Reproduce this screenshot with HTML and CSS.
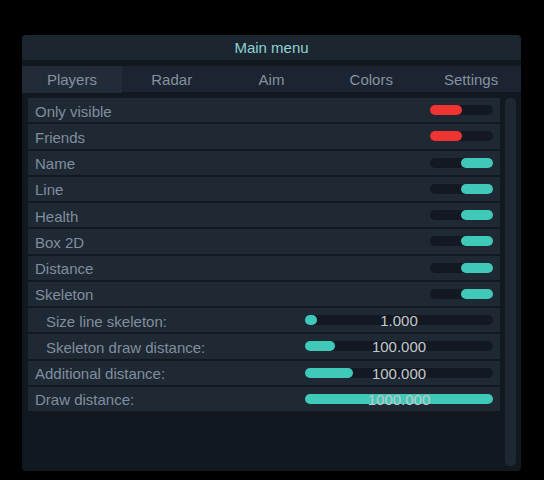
FILE: index.html
```html
<!DOCTYPE html>
<html>
<head>
<meta charset="utf-8">
<link rel="stylesheet" href="styles.css">
</head>
<body>
<div class="window">
  <div class="title">Main menu</div>
  <div class="tabs">
    <div class="tab active">Players</div>
    <div class="tab">Radar</div>
    <div class="tab">Aim</div>
    <div class="tab">Colors</div>
    <div class="tab">Settings</div>
  </div>
  <div class="body">
    <div class="list">
      <div class="row"><span class="label">Only visible</span><div class="toggle off"><div class="knob"></div></div></div>
      <div class="row"><span class="label">Friends</span><div class="toggle off"><div class="knob"></div></div></div>
      <div class="row"><span class="label">Name</span><div class="toggle on"><div class="knob"></div></div></div>
      <div class="row"><span class="label">Line</span><div class="toggle on"><div class="knob"></div></div></div>
      <div class="row"><span class="label">Health</span><div class="toggle on"><div class="knob"></div></div></div>
      <div class="row"><span class="label">Box 2D</span><div class="toggle on"><div class="knob"></div></div></div>
      <div class="row"><span class="label">Distance</span><div class="toggle on"><div class="knob"></div></div></div>
      <div class="row"><span class="label">Skeleton</span><div class="toggle on"><div class="knob"></div></div></div>
      <div class="row indent"><span class="label">Size line skeleton:</span><div class="slider"><div class="fill" style="width:12px"></div><span class="value">1.000</span></div></div>
      <div class="row indent"><span class="label">Skeleton draw distance:</span><div class="slider"><div class="fill" style="width:30px"></div><span class="value">100.000</span></div></div>
      <div class="row"><span class="label">Additional distance:</span><div class="slider"><div class="fill" style="width:48px"></div><span class="value">100.000</span></div></div>
      <div class="row"><span class="label">Draw distance:</span><div class="slider"><div class="fill" style="width:188px"></div><span class="value">1000.000</span></div></div>
    </div>
    <div class="scrollbar"></div>
  </div>
</div>
</body>
</html>
```

FILE: styles.css
```css
html, body {
  margin: 0;
  padding: 0;
  background: #000;
}
body {
  font-family: "Liberation Sans", Arial, sans-serif;
  font-size: 15px;
  padding-top: 35px;
  padding-left: 22px;
}
.window {
  width: 499px;
  height: 436px;
  background: #111820;
  border-radius: 4px;
  display: flex;
  flex-direction: column;
  overflow: hidden;
}
.title {
  height: 25px;
  line-height: 26px;
  background: #1c2631;
  color: #8fd2d2;
  text-align: center;
  font-size: 15px;
  border-radius: 4px 4px 0 0;
}
.tabs {
  margin-top: 6px;
  height: 26px;
  display: grid;
  grid-template-columns: repeat(5, 1fr);
  background: #1b2430;
}
.tab {
  line-height: 27px;
  text-align: center;
  color: #8591a0;
}
.tab.active {
  background: #222c38;
}
.body {
  flex: 1;
  display: flex;
  gap: 5px;
  padding: 6px 5px 5px 6px;
  min-height: 0;
}
.list {
  flex: 1;
  display: flex;
  flex-direction: column;
  gap: 2px;
}
.row {
  height: 24.25px;
  background: #1f2934;
  display: flex;
  align-items: center;
  justify-content: space-between;
  padding: 0 7px;
  color: #808e9e;
}
.row .label {
  padding-top: 2px;
}
.row.indent .label {
  padding-left: 11px;
}
.toggle {
  width: 63px;
  height: 10px;
  border-radius: 5px;
  background: #121922;
  display: flex;
}
.toggle .knob {
  width: 32px;
  height: 10px;
  border-radius: 5px;
}
.toggle.off .knob {
  background: #f03434;
}
.toggle.on {
  justify-content: flex-end;
}
.toggle.on .knob {
  background: #40c8b8;
}
.slider {
  position: relative;
  width: 188px;
  height: 10px;
  border-radius: 5px;
  background: #121922;
}
.slider .fill {
  height: 10px;
  border-radius: 5px;
  background: #40c8b8;
}
.slider .value {
  position: absolute;
  left: 0;
  right: 0;
  top: -2px;
  line-height: 16px;
  text-align: center;
  color: #c3c8cc;
  font-size: 15px;
}
.scrollbar {
  width: 11px;
  background: #1e2833;
  border-radius: 5px;
}
```
